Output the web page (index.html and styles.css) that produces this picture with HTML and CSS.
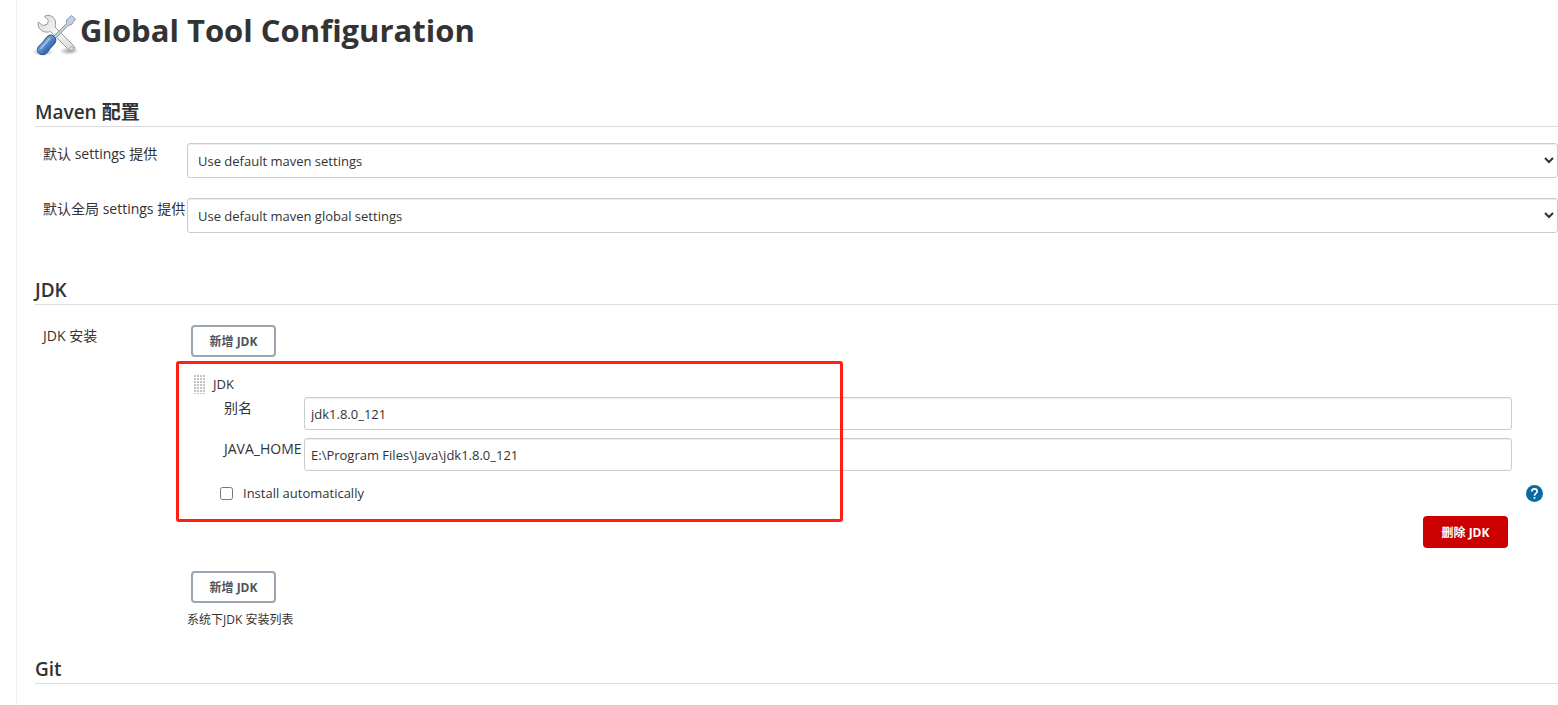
FILE: index.html
```html
<!DOCTYPE html>
<html lang="zh-CN">

<head>
    <meta charset="UTF-8">
    <meta name="viewport" content="width=device-width, initial-scale=1.0">
    <title>Global Tool Configuration</title>
    <link rel="stylesheet" href="styles.css">
</head>

<body>

    <main class="main-panel">
        <header class="page-header">
            <svg class="page-icon" viewBox="0 0 48 48" aria-hidden="true">
                <defs>
                    <linearGradient id="metal" x1="0" y1="0" x2="1" y2="1">
                        <stop offset="0" stop-color="#d9dad8" />
                        <stop offset="0.5" stop-color="#f6f6f5" />
                        <stop offset="1" stop-color="#d3d5d2" />
                    </linearGradient>
                    <linearGradient id="handle" x1="0" y1="0" x2="1" y2="1">
                        <stop offset="0" stop-color="#3465a4" />
                        <stop offset="0.4" stop-color="#6f9bd0" />
                        <stop offset="0.6" stop-color="#3f73b8" />
                        <stop offset="1" stop-color="#204a87" />
                    </linearGradient>
                    <radialGradient id="shadow">
                        <stop offset="0" stop-color="#000" stop-opacity="0.35" />
                        <stop offset="1" stop-color="#000" stop-opacity="0" />
                    </radialGradient>
                </defs>
                <ellipse cx="11" cy="41" rx="11" ry="4" fill="url(#shadow)" />
                <ellipse cx="37" cy="40" rx="10" ry="4" fill="url(#shadow)" />
                <!-- wrench -->
                <path d="M14 4.500 C18 3.500 23 6 23.500 11 C23.800 13 23.300 14.500 23 16 L42 35 C44.500 38 41.500 42 38 40 L18.500 20.500 C13 22.500 6 19.500 6 12.500 L6.500 11 L10.500 14.500 L15 13.500 L16.500 9.500 L12.500 5.500 Z" fill="url(#metal)" stroke="#999b96" stroke-linejoin="round" />
                <circle cx="39.500" cy="37.500" r="1.600" fill="#eee" stroke="#a0a29d" />
                <!-- screwdriver -->
                <path d="M20.500 26.500 L34.500 12.500 L34.500 9 L39.500 4.500 L43.500 8 L39.500 13.500 L36 14.500 L22.500 28.500 Z" fill="#c5d0dc" stroke="#8796a8" stroke-linejoin="round" />
                <path d="M17 24.500 C20 22.500 25.500 27 23.500 31 C21 35.500 18.500 36 16 40.500 C13 45.500 5.500 44 5.500 39.500 C5 36 8 34 10.500 31.500 C13 29 13.500 26 17 24.500 Z" fill="url(#handle)" stroke="#204a87" />
                <path d="M17.500 27.500 L9 37.500" stroke="#a9c4e6" stroke-width="1.500" stroke-linecap="round" />
            </svg>
            <h1>Global Tool Configuration</h1>
        </header>

        <section class="section">
            <h2>Maven 配置</h2>
            <div class="row">
                <label for="settings">默认 settings 提供</label>
                <select id="settings">
                    <option>Use default maven settings</option>
                </select>
            </div>
            <div class="row">
                <label for="global-settings">默认全局 settings 提供</label>
                <select id="global-settings">
                    <option>Use default maven global settings</option>
                </select>
            </div>
        </section>

        <section class="section section-jdk">
            <h2>JDK</h2>
            <div class="row">
                <span class="row-label">JDK 安装</span>
                <div class="tools">
                    <button type="button" class="btn">新增 JDK</button>

                    <div class="tool">
                        <div class="highlight"></div>
                        <div class="tool-title"><span class="grip"></span>JDK</div>
                        <div class="field">
                            <label for="name">别名</label>
                            <input type="text" id="name" value="jdk1.8.0_121">
                        </div>
                        <div class="field">
                            <label for="home">JAVA_HOME</label>
                            <input type="text" id="home" value="E:\Program Files\Java\jdk1.8.0_121">
                        </div>
                        <div class="auto">
                            <input type="checkbox" id="auto">
                            <label for="auto">Install automatically</label>
                            <a href="#" class="help" aria-label="Help">
                                <svg viewBox="0 0 24 24" aria-hidden="true">
                                    <circle cx="12" cy="12" r="12" fill="#0b6aa2" />
                                    <path d="M8.300 9.200 C8.300 4.300 15.700 4.300 15.700 9.200 C15.700 11.800 12 12 12 15" fill="none" stroke="#fff" stroke-width="2.400" />
                                    <rect x="10.800" y="17" width="2.400" height="2.400" fill="#fff" />
                                </svg>
                            </a>
                        </div>
                        <button type="button" class="btn btn-delete">删除 JDK</button>
                    </div>

                    <button type="button" class="btn">新增 JDK</button>
                    <p class="note">系统下JDK 安装列表</p>
                </div>
            </div>
        </section>

        <section class="section section-git">
            <h2>Git</h2>
        </section>
    </main>

</body>

</html>
```

FILE: styles.css
```css
* {
    box-sizing: border-box;
}

body {
    margin: 0;
    background-color: #fff;
    color: #333;
    font-family: "Open Sans", "Noto Sans CJK SC", sans-serif;
    font-size: 13px;
    line-height: 20px;
}

.main-panel {
    margin-left: 16px;
    min-height: 100vh;
    border-left: 1px solid #e9eff3;
}

.page-header {
    display: flex;
    padding: 11px 0 0 15px;
}

.page-icon {
    width: 48px;
    height: 48px;
}

h1 {
    margin: 0;
    font-size: 31px;
    line-height: 38px;
    font-weight: 700;
}

.section {
    margin: 40px 0 0 18px;
}

h2 {
    margin: 0 0 16px;
    height: 28px;
    border-bottom: 1px solid #ddd;
    font-size: 19px;
    line-height: 26px;
    font-weight: 600;
}

.row {
    display: grid;
    grid-template-columns: 144px 1fr;
    padding-left: 8px;
    margin-bottom: 20px;
}

.row > label,
.row-label,
.field label {
    font-size: 14px;
    line-height: 22px;
    white-space: nowrap;
}

.section-jdk {
    margin-top: 44px;
}

.section-jdk h2 {
    margin-bottom: 20px;
}

.section-git {
    margin-top: 26px;
}

select,
input[type="text"] {
    width: 100%;
    border: 1px solid #ccc;
    border-radius: 3px;
    background-color: #fff;
    box-shadow: inset 0 1px 1px rgba(0, 0, 0, 0.08);
    color: #333;
    font: inherit;
}

select {
    height: 35px;
    padding: 0 6px;
}

.btn {
    display: block;
    width: 85px;
    height: 32px;
    margin-left: 4px;
    padding: 1px 0 0;
    border: 2px solid #9aa5af;
    border-radius: 4px;
    background-color: #fff;
    color: #4d545d;
    font: inherit;
    font-size: 12px;
    font-weight: 700;
}

.tool {
    position: relative;
    margin-bottom: 23px;
    padding: 17px 46px 0 6px;
}

/* red frame over the JDK entry */
.highlight {
    position: absolute;
    top: 4px;
    left: -11px;
    width: 667px;
    height: 161px;
    border: 3px solid #ff1e10;
    border-radius: 3px;
    pointer-events: none;
}

.tool-title {
    display: flex;
    gap: 8px;
    margin-bottom: 3px;
}

/* drag handle: grey dots cut by white lines */
.grip {
    width: 12px;
    height: 20px;
    background-color: #c4c4c4;
    background-image:
        linear-gradient(to right, #fff 1px, transparent 1px),
        linear-gradient(to bottom, #fff 1px, transparent 1px);
    background-size: 3px 3px;
}

.field {
    display: grid;
    grid-template-columns: 80px 1fr;
    margin: 0 0 8px 31px;
}

.field input {
    height: 33px;
    padding: 0 6px;
}

.auto {
    display: flex;
    align-items: center;
    margin: 12px -31px 0 27px;
}

.auto input {
    width: 13px;
    height: 13px;
    margin: 0 10px 0 0;
}

.help {
    margin-left: auto;
    height: 17px;
}

.help svg {
    display: block;
    width: 17px;
    height: 17px;
}

.btn-delete {
    margin: 13px 4px 0 auto;
    border-color: #c00;
    background-color: #c00;
    color: #fff;
}

.note {
    margin: 7px 0 0;
    font-size: 12px;
}
```
